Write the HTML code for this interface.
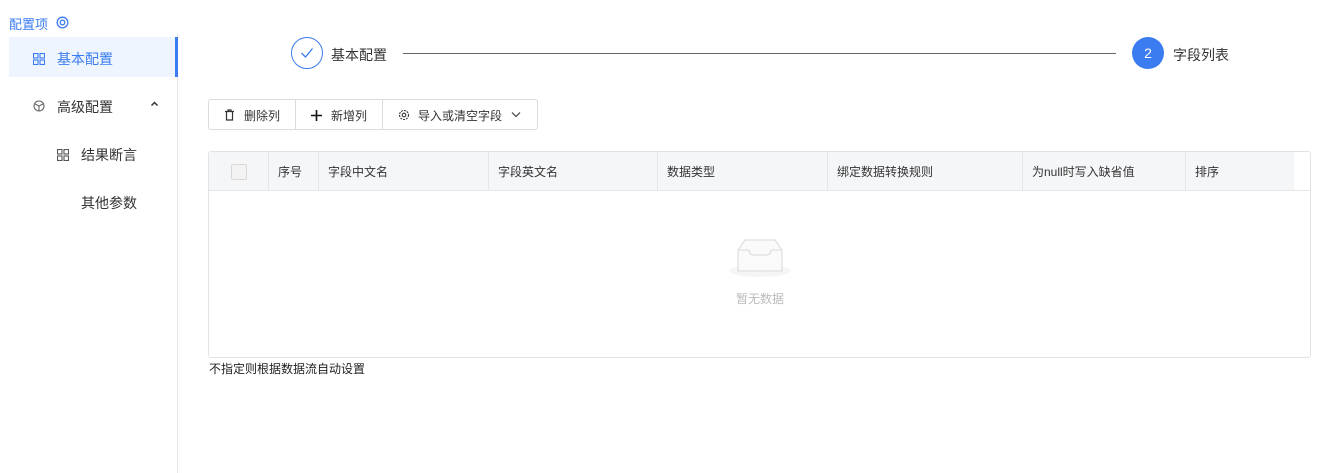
<!DOCTYPE html>
<html><head><meta charset="utf-8"><style>
*{margin:0;padding:0;box-sizing:border-box}
body{width:1322px;height:473px;background:#fff;font-family:"Liberation Sans","Noto Sans CJK SC",sans-serif;font-size:13px;color:#333;position:relative;overflow:hidden}
.a{position:absolute;white-space:nowrap}
</style></head><body>
<div class="a" style="left:9px;top:14px;color:#3b7cf0;font-size:13px">配置项</div>
<svg class="a" style="left:56px;top:16px" width="13" height="13" viewBox="0 0 13 13"><circle cx="6.5" cy="6.5" r="5.3" fill="none" stroke="#3b7cf0" stroke-width="1.3"/><circle cx="6.5" cy="6.5" r="2.3" fill="none" stroke="#3b7cf0" stroke-width="1.3"/></svg>
<div class="a" style="left:177px;top:33px;width:1px;height:440px;background:#e6e6e6"></div>
<div class="a" style="left:9px;top:37px;width:169px;height:40px;background:#eef5fe;border-right:3px solid #3b7cf0"></div>
<svg class="a" style="left:33px;top:53px" width="12" height="12" viewBox="0 0 12 12" fill="none" stroke="#3b7cf0" stroke-width="1.1"><rect x=".5" y=".5" width="4.5" height="4.5"/><rect x="7" y=".5" width="4.5" height="4.5"/><rect x=".5" y="7" width="4.5" height="4.5"/><rect x="7" y="7" width="4.5" height="4.5"/></svg>
<div class="a" style="left:57px;top:49px;color:#3b7cf0;font-size:14px">基本配置</div>
<svg class="a" style="left:33px;top:100px" width="12" height="12" viewBox="0 0 12 12" fill="none" stroke="#666" stroke-width="1.1"><circle cx="6" cy="6" r="5"/><path d="M2 4l4 2 4-2M6 6v5"/></svg>
<div class="a" style="left:57px;top:97px;font-size:14px">高级配置</div>
<svg class="a" style="left:150px;top:101px" width="9" height="6" viewBox="0 0 9 6"><path d="M1.5 4.5l3-3 3 3" fill="none" stroke="#333" stroke-width="1.5"/></svg>
<svg class="a" style="left:57px;top:149px" width="12" height="12" viewBox="0 0 12 12" fill="none" stroke="#555" stroke-width="1.1"><rect x=".5" y=".5" width="4.5" height="4.5"/><rect x="7" y=".5" width="4.5" height="4.5"/><rect x=".5" y="7" width="4.5" height="4.5"/><rect x="7" y="7" width="4.5" height="4.5"/></svg>
<div class="a" style="left:81px;top:145px;font-size:14px">结果断言</div>
<div class="a" style="left:81px;top:193px;font-size:14px">其他参数</div>

<div class="a" style="left:291px;top:37px;width:32px;height:32px;border:1px solid #3b7cf0;border-radius:50%"></div>
<svg class="a" style="left:300px;top:47px" width="14" height="12" viewBox="0 0 14 12"><path d="M1.5 6l4 4 7-8.5" fill="none" stroke="#3b7cf0" stroke-width="1.3"/></svg>
<div class="a" style="left:331px;top:45px;font-size:14px">基本配置</div>
<div class="a" style="left:403px;top:53px;width:713px;height:1px;background:#666"></div>
<div class="a" style="left:1132px;top:37px;width:32px;height:32px;border-radius:50%;background:#3b7cf0;color:#fff;text-align:center;line-height:32px;font-size:14px">2</div>
<div class="a" style="left:1173px;top:45px;font-size:14px">字段列表</div>

<div class="a" style="left:208px;top:99px;width:330px;height:31px;border:1px solid #dcdcdc;border-radius:3px"></div>
<div class="a" style="left:295px;top:99px;width:1px;height:31px;background:#dcdcdc"></div>
<div class="a" style="left:382px;top:99px;width:1px;height:31px;background:#dcdcdc"></div>
<svg class="a" style="left:224px;top:109px" width="11" height="12" viewBox="0 0 11 12" fill="none" stroke="#333" stroke-width="1.2"><path d="M1 2.5h9M4 2.5V1h3v1.5M2.5 2.5v8.5h6V2.5"/></svg>
<div class="a" style="left:244px;top:107px;font-size:12px">删除列</div>
<svg class="a" style="left:311px;top:110px" width="11" height="11" viewBox="0 0 11 11"><path d="M5.5 0v11M0 5.5h11" stroke="#111" stroke-width="1.6"/></svg>
<div class="a" style="left:331px;top:107px;font-size:12px">新增列</div>
<svg class="a" style="left:398px;top:109px" width="12" height="12" viewBox="0 0 12 12" fill="none" stroke="#333" stroke-width="1.1"><circle cx="6" cy="6" r="4.5" stroke-dasharray="2 1"/><circle cx="6" cy="6" r="1.8"/></svg>
<div class="a" style="left:418px;top:107px;font-size:12px">导入或清空字段</div>
<svg class="a" style="left:511px;top:111px" width="10" height="7" viewBox="0 0 10 7"><path d="M1 1.5l4 4 4-4" fill="none" stroke="#333" stroke-width="1.1"/></svg>

<div class="a" style="left:208px;top:151px;width:1103px;height:207px;border:1px solid #e3e3e3;border-radius:3px"></div>
<div class="a" style="left:209px;top:152px;width:1085px;height:38px;background:#f5f6f8"></div>
<div class="a" style="left:209px;top:190px;width:1101px;height:1px;background:#e6e6e6"></div>
<div class="a" style="left:231px;top:164px;width:16px;height:16px;border:1px solid #d8d8d8;border-radius:2px;background:#f3f3f3"></div>
<div class="a" style="left:268px;top:152px;width:1px;height:38px;background:#e6e6e6"></div>
<div class="a" style="left:318px;top:152px;width:1px;height:38px;background:#e6e6e6"></div>
<div class="a" style="left:488px;top:152px;width:1px;height:38px;background:#e6e6e6"></div>
<div class="a" style="left:657px;top:152px;width:1px;height:38px;background:#e6e6e6"></div>
<div class="a" style="left:827px;top:152px;width:1px;height:38px;background:#e6e6e6"></div>
<div class="a" style="left:1022px;top:152px;width:1px;height:38px;background:#e6e6e6"></div>
<div class="a" style="left:1185px;top:152px;width:1px;height:38px;background:#e6e6e6"></div>
<div class="a" style="left:278px;top:163px;font-size:12px">序号</div>
<div class="a" style="left:328px;top:163px;font-size:12px">字段中文名</div>
<div class="a" style="left:498px;top:163px;font-size:12px">字段英文名</div>
<div class="a" style="left:667px;top:163px;font-size:12px">数据类型</div>
<div class="a" style="left:837px;top:163px;font-size:12px">绑定数据转换规则</div>
<div class="a" style="left:1032px;top:163px;font-size:12px">为null时写入缺省值</div>
<div class="a" style="left:1195px;top:163px;font-size:12px">排序</div>
<svg class="a" style="left:728px;top:238px" width="64" height="40" viewBox="0 0 64 40"><ellipse cx="32" cy="33" rx="31" ry="6" fill="#f5f5f5"/><path d="M10 12l7-10h30l7 10v21H10z" fill="#fafafa" stroke="#d9d9d9"/><path d="M10 12h11q0 5 5 5h12q5 0 5-5h11" fill="none" stroke="#d9d9d9"/></svg>
<div class="a" style="left:736px;top:290px;font-size:12px;color:#bbb">暂无数据</div>
<div class="a" style="left:209px;top:360px;font-size:12px;color:#222">不指定则根据数据流自动设置</div>
</body></html>
